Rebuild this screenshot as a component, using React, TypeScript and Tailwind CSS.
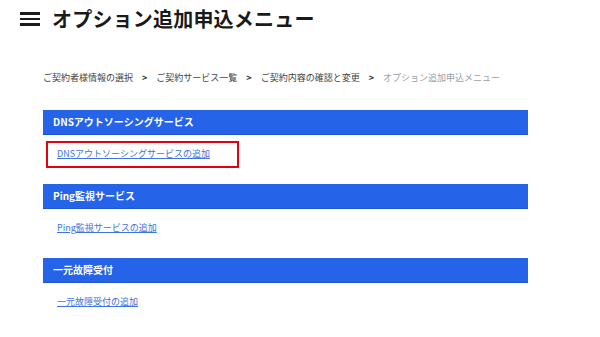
import React from 'react';

const font = { fontFamily: '"Noto Sans CJK JP", "Liberation Sans", sans-serif' };

const crumbs = ['ご契約者様情報の選択', 'ご契約サービス一覧', 'ご契約内容の確認と変更'];

const sections = [
    { title: 'DNSアウトソーシングサービス', link: 'DNSアウトソーシングサービスの追加', marked: true },
    { title: 'Ping監視サービス', link: 'Ping監視サービスの追加', marked: false },
    { title: '一元故障受付', link: '一元故障受付の追加', marked: false },
];

const App: React.FC = () => {
    return (
        <div className="w-[600px] h-[337px] bg-white overflow-hidden" style={font}>
            <header className="flex items-center gap-[12px] pl-[20px] pt-[8px] h-[30px]">
                <div className="flex flex-col gap-[3px] w-[20px]">
                    <span className="block h-[2.5px] bg-[#1a1a1a]"></span>
                    <span className="block h-[2.5px] bg-[#1a1a1a]"></span>
                    <span className="block h-[2.5px] bg-[#1a1a1a]"></span>
                </div>
                <h1 className="text-[20px] leading-[20px] font-bold text-[#1a1a1a] tracking-[0.2px]">オプション追加申込メニュー</h1>
            </header>

            <nav className="flex items-center pl-[43px] mt-[40px] h-[16px] text-[9px] leading-[16px]">
                {crumbs.map((c) => (
                    <React.Fragment key={c}>
                        <span className="text-[#444]">{c}</span>
                        <span className="mx-[9px] text-[#333] font-bold">&gt;</span>
                    </React.Fragment>
                ))}
                <span className="text-[#9aa0a6]">オプション追加申込メニュー</span>
            </nav>

            <main className="flex flex-col gap-[11px] pl-[43px] pr-[72px] mt-[24px]">
                {sections.map((s) => (
                    <section key={s.title} className="flex flex-col">
                        <div className="h-[25px] bg-[#2563e8] border-b border-[#1e54cc] flex items-center pl-[10px] text-white text-[10px] leading-[12px] font-bold">
                            {s.title}
                        </div>
                        <div className="h-[38px] flex items-center">
                            <div className={s.marked ? 'ml-[3px] w-[193px] h-[27px] border-2 border-[#e60012] flex items-center pl-[9px]' : 'ml-[14px] flex items-center h-[27px]'}>
                                <a href="#" className="text-[9px] leading-[12px] text-[#3d74e0] underline">{s.link}</a>
                            </div>
                        </div>
                    </section>
                ))}
            </main>
        </div>
    );
};

export default App;
